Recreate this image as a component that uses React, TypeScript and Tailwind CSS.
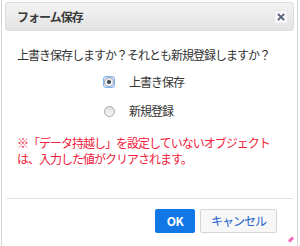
import React from "react";

export default function App() {
  const font = { fontFamily: '"Noto Sans CJK JP", "Noto Sans", sans-serif' };
  return (
    <div className="w-[300px] h-[246px] bg-white relative overflow-hidden" style={font}>
      <div className="absolute left-[1px] top-0 w-[297px] h-[246px] border-x border-[#d4d4d4] bg-white flex flex-col">
        {/* header */}
        <div className="mx-[3px] mt-[2px] h-[29px] rounded-[3px] border border-[#dcdcdc] bg-gradient-to-b from-[#f3f3f3] to-[#e3e3e3] flex items-center justify-between pl-[11px] pr-[5px]">
          <span className="text-[12px] font-bold text-[#3a3a3a] tracking-[-1px] leading-none">フォーム保存</span>
          <div className="w-[14px] h-[14px] bg-[#f8f8f8] border border-[#e8e8e8] flex items-center justify-center">
            <svg width="8" height="8" viewBox="0 0 8 8">
              <path d="M1.5 1.5 L6.5 6.5 M6.5 1.5 L1.5 6.5" stroke="#56607a" strokeWidth="1.8" strokeLinecap="square" />
            </svg>
          </div>
        </div>
        {/* body */}
        <div className="pl-[15px] pt-[16px] text-[12px] tracking-[-1px] text-[#333] leading-[16px]">
          <div>上書き保存しますか？それとも新規登録しますか？</div>
          <div className="mt-[11px] pl-[86px] flex flex-col gap-[13px]">
            <div className="flex items-center gap-[14px] h-[16px]">
              <div className="w-[12px] h-[12px] rounded-[3px] border border-[#7fb0f5] bg-[#dbe8fb] flex items-center justify-center">
                <div className="w-[10px] h-[10px] rounded-full border border-[#9aa3ad] bg-gradient-to-b from-[#e4e4e4] to-[#f8f8f8] flex items-center justify-center">
                  <div className="w-[4px] h-[4px] rounded-full bg-[#3b4450]" />
                </div>
              </div>
              <span>上書き保存</span>
            </div>
            <div className="flex items-center gap-[14px] h-[16px]">
              <div className="w-[12px] h-[12px] flex items-center justify-center">
                <div className="w-[11px] h-[11px] rounded-full border border-[#a9a9a9] bg-gradient-to-b from-[#dedede] to-[#f8f8f8]" />
              </div>
              <span>新規登録</span>
            </div>
          </div>
          <div className="mt-[16px] text-[#f2203a]">
            <div>※「データ持越し」を設定していないオブジェクト</div>
            <div>は、入力した値がクリアされます。</div>
          </div>
        </div>
        {/* footer */}
        <div className="mt-[31px] mx-[4px] border-t border-[#e2e2e2] flex justify-end gap-[5px] pt-[10px] pr-[16px]">
          <button className="w-[40px] h-[24px] rounded-[2px] bg-[#1277e6] text-white text-[12px] font-bold tracking-[-0.5px] flex items-center justify-center" style={font}>OK</button>
          <button className="w-[77px] h-[24px] rounded-[2px] border border-[#d6d6d6] bg-[#f7f7f7] text-[#1a62c9] text-[12px] tracking-[-1px] flex items-center justify-center" style={font}>キャンセル</button>
        </div>
      </div>
      <div className="absolute left-[288px] top-[238px] w-[6px] h-[3px] bg-[#f06ab8] rotate-[-45deg] rounded-[1px]" />
    </div>
  );
}
